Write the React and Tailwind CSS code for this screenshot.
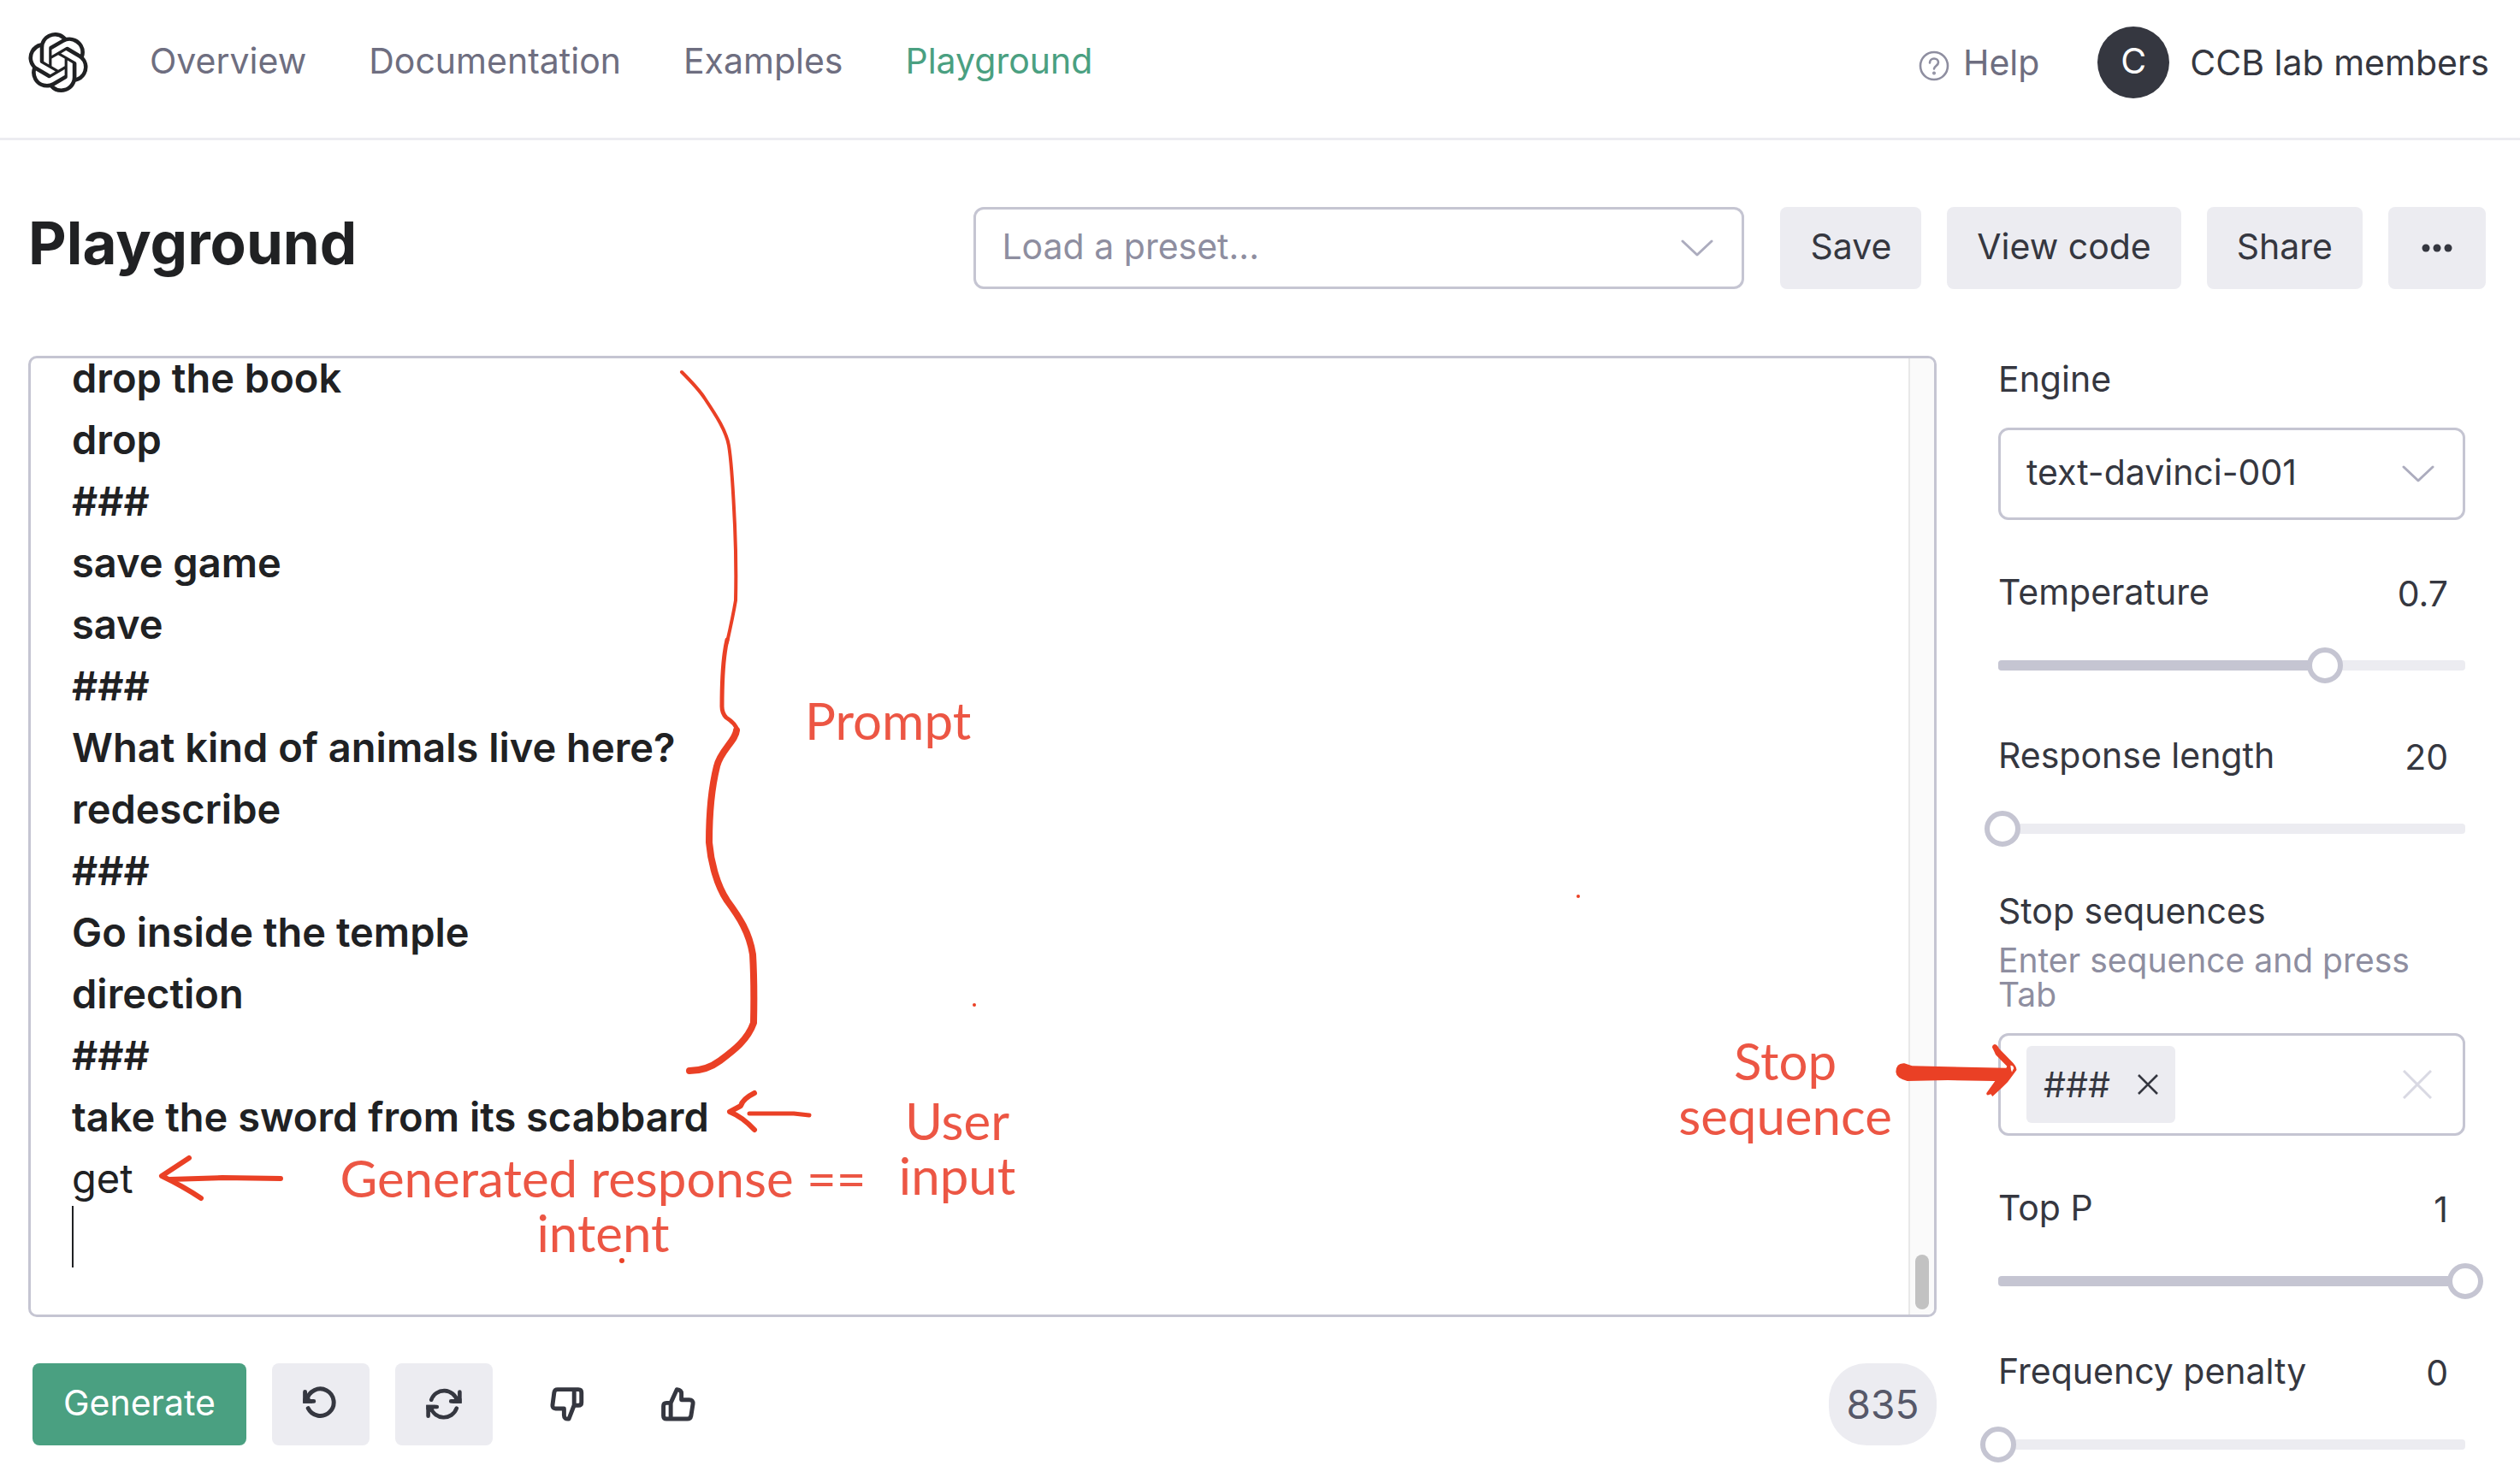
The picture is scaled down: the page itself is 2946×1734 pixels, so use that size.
import { useState } from "react";
import { SiOpenai } from "react-icons/si";

const promptLines = [
  "drop the book",
  "drop",
  "###",
  "save game",
  "save",
  "###",
  "What kind of animals live here?",
  "redescribe",
  "###",
  "Go inside the temple",
  "direction",
  "###",
  "take the sword from its scabbard",
];

function Chevron() {
  return (
    <svg
      className="pointer-events-none absolute top-1/2 right-9 h-5 w-[38px] -translate-y-1/2"
      viewBox="0 0 38 20"
      fill="none"
      stroke="#acacbe"
      strokeWidth="3"
      strokeLinecap="round"
      strokeLinejoin="round"
      aria-hidden="true"
    >
      <path d="M2 2 19 18 36 2" />
    </svg>
  );
}

function HelpIcon() {
  return (
    <svg className="mt-2 size-9" viewBox="0 0 36 36" fill="none" stroke="#8e8ea0" strokeWidth="2.6" strokeLinecap="round" aria-hidden="true">
      <circle cx="18" cy="18" r="16" />
      <path d="M13 14.5c0-3 2.2-5 5-5s5 1.900 5 4.500c0 3.800-5 4-5 7.500" />
      <circle cx="18" cy="26.500" r="0.700" fill="#8e8ea0" />
    </svg>
  );
}

function UndoIcon() {
  return (
    <svg className="h-11 w-[46px]" viewBox="155 124 140 132" fill="none" stroke="#353740" strokeWidth="15" strokeLinecap="round" aria-hidden="true">
      <path d="M180 204A48 48 0 1 0 176 174" />
      <path d="M169 146V179H200" />
      <path d="M162 186V170L180 160 195 180V186Z" fill="#353740" stroke="none" />
    </svg>
  );
}

function RefreshIcon() {
  return (
    <svg className="h-11 w-[46px]" viewBox="587 124 140 132" fill="none" stroke="#353740" strokeWidth="14" strokeLinecap="round" aria-hidden="true">
      <path d="M612 174A48 48 0 0 1 704 178" />
      <path d="M713 146V179H682" />
      <path d="M720 186V170L702 160 687 180V186Z" fill="#353740" stroke="none" />
      <path d="M702 204A48 48 0 0 1 610 200" />
      <path d="M601 232V199H632" />
      <path d="M594 192V208L612 218 627 198V192Z" fill="#353740" stroke="none" />
    </svg>
  );
}

function ThumbDownIcon() {
  return (
    <svg className="h-11 w-[46px]" viewBox="1020 122 140 134" fill="none" stroke="#353740" strokeWidth="15" strokeLinejoin="round" aria-hidden="true">
      <path d="M1115 192 1096 241Q1079 243 1079 228V204H1049Q1037 204 1038 192L1044 146Q1046 136 1056 136H1130Q1141 136 1141 147V183Q1141 193 1130 193H1115V136" />
    </svg>
  );
}

function ThumbUpIcon() {
  return (
    <svg className="h-11 w-[46px]" viewBox="1415 122 140 134" fill="none" stroke="#353740" strokeWidth="15" strokeLinejoin="round" aria-hidden="true">
      <path d="M1458 184 1480 136Q1496 138 1496 150V173H1524Q1538 173 1537 187L1530 231Q1528 241 1517 241H1443Q1432 241 1432 230V195Q1432 184 1443 184H1458V241" />
    </svg>
  );
}

function SmallButton({ children }) {
  return (
    <button type="button" className="flex h-24 items-center rounded-lg bg-[#ececf1] px-[35px] pb-1 text-[#353740]">
      {children}
    </button>
  );
}

function Slider({ id, label, min, max, step, initial, className }) {
  const [value, setValue] = useState(initial);
  const percent = ((value - min) / (max - min)) * 100;
  return (
    <div className={className}>
      <div className="mb-[41px] flex h-12 justify-between pr-5">
        <label htmlFor={id}>{label}</label>
        <output htmlFor={id} className="pt-0.5">
          {value}
        </output>
      </div>
      <div className="relative flex h-[42px] items-center">
        <div className="h-3 w-full overflow-hidden rounded bg-[#ececf1]">
          <div className="h-full bg-[#c5c5d2]" style={{ width: `${percent}%` }} />
        </div>
        <input
          id={id}
          type="range"
          min={min}
          max={max}
          step={step}
          value={value}
          onChange={(e) => setValue(Number(e.target.value))}
          className="absolute inset-y-0 -left-[21px] h-[42px] w-[calc(100%+42px)] appearance-none bg-transparent [&::-webkit-slider-thumb]:size-[42px] [&::-webkit-slider-thumb]:appearance-none [&::-webkit-slider-thumb]:rounded-full [&::-webkit-slider-thumb]:border-[6px] [&::-webkit-slider-thumb]:border-[#c5c5d2] [&::-webkit-slider-thumb]:bg-white"
        />
      </div>
    </div>
  );
}

function EditorAnnotations() {
  return (
    <div className="pointer-events-none absolute top-0 left-0 font-[Lato,sans-serif] text-[60px] leading-16 text-[#ec5644]">
      <svg
        className="absolute top-0 left-0 h-[1120px] w-[1860px]"
        viewBox="36 419 1860 1120"
        fill="none"
        stroke="#ea4025"
        strokeLinecap="round"
        strokeLinejoin="round"
        aria-hidden="true"
      >
        <path strokeWidth="4" d="M797 435C808 446 817 455 824 466C838 487 849 504 852 521C856 545 857 575 859 614Q861 660 860 702Q857 720 850 751" />
        <path strokeWidth="5" d="M850 748C846 765 844 790 844 826Q844 834 849 839Q860 846 862 854" />
        <path strokeWidth="8" d="M861 854C860 866 842 878 838 896C832 920 829 950 829 985C831 1008 838 1035 850 1053C864 1072 876 1090 880 1116Q882 1150 881 1196C874 1216 858 1228 842 1240Q826 1252 806 1252" />
        <path strokeWidth="6" d="M882 1278Q868 1285 866 1293L853 1300Q868 1306 882 1321" />
        <path strokeWidth="5" d="M876 1302H928L946 1304" />
        <path strokeWidth="6" d="M221 1354 189 1375Q214 1387 235 1401" />
        <path strokeWidth="6" d="M199 1379 260 1377 328 1378" />
        <g fill="#ea4025" stroke="none">
          <circle cx="1139" cy="1175" r="2" />
          <circle cx="727" cy="1474" r="3" />
          <circle cx="1845" cy="1048" r="2" />
        </g>
      </svg>
      <p className="absolute top-[391px] left-[905px]">Prompt</p>
      <p className="absolute top-[859px] left-[1008px] w-[150px] text-center">User input</p>
      <p className="absolute top-[926px] left-[334px] w-[670px] text-center">Generated response == intent</p>
    </div>
  );
}

function StopAnnotation() {
  return (
    <div className="pointer-events-none absolute -top-[3px] right-full flex text-center font-[Lato,sans-serif] text-[60px] leading-16 text-[#ec5644]">
      <p className="mr-[122px] w-[260px]">Stop sequence</p>
      <svg className="absolute top-3 -right-[22px] h-[64px] w-[148px]" viewBox="68 90 444 192" fill="#ea4025" aria-hidden="true">
        <path d="M78 190Q79 158 108 160L135 169 260 172 465 176 468 170 428 130Q422 115 416 104 416 95 425 93 434 94 440 108L478 147Q504 172 501 184 488 202 470 226 450 246 417 276L411 268Q394 276 396 264L426 222 260 219 118 222Q79 212 78 190Z" />
        <path d="M480 167Q492 168 491 178L485 191 482 182Z" fill="#fff" />
      </svg>
    </div>
  );
}

export default function App() {
  return (
    <div className="flex h-screen flex-col overflow-hidden bg-white font-[Inter,sans-serif] text-[41px] leading-12 text-[#353740]">
      <header className="flex items-center border-b-[3px] border-[#ececf1] pt-[31px] pr-9 pb-[46px] pl-[33px]">
        <a href="#home" aria-label="OpenAI">
          <SiOpenai className="size-[70px] text-[#202123]" />
        </a>
        <nav className="ml-[72px] flex gap-[73px] pb-1 text-[#6e6e80]">
          <a href="#overview">Overview</a>
          <a href="#documentation">Documentation</a>
          <a href="#examples">Examples</a>
          <a href="#playground" className="text-[#4aa081]">Playground</a>
        </nav>
        <a href="#help" className="ml-auto flex items-center gap-4 text-[#6e6e80]">
          <HelpIcon />
          Help
        </a>
        <button type="button" className="ml-[68px] flex items-center gap-6">
          <span className="flex size-[84px] items-center justify-center rounded-full bg-[#353740] pb-1 text-white">C</span>
          CCB lab members
        </button>
      </header>

      <main className="flex min-h-0 flex-1 flex-col pt-[78px] pr-10 pb-11 pl-[33px]">
        <div className="mb-[78px] flex h-24 items-center gap-[30px]">
          <h1 className="mr-auto pb-3 text-[69px] leading-20 font-bold text-[#202123]">Playground</h1>
          <div className="relative mr-3 w-[901px]">
            <select aria-label="Load a preset" className="h-24 w-full appearance-none rounded-xl border-[3px] border-[#c5c5d2] bg-white pb-1 pl-[30px] text-[#8e8ea0]">
              <option>Load a preset...</option>
            </select>
            <Chevron />
          </div>
          <SmallButton>Save</SmallButton>
          <SmallButton>View code</SmallButton>
          <SmallButton>Share</SmallButton>
          <button type="button" aria-label="More" className="flex h-24 w-[114px] items-center justify-center rounded-lg bg-[#ececf1]">
            <svg className="h-3 w-9" viewBox="0 0 36 12" fill="#353740" aria-hidden="true">
              <circle cx="5" cy="6" r="4.500" />
              <circle cx="18" cy="6" r="4.500" />
              <circle cx="31" cy="6" r="4.500" />
            </svg>
          </button>
        </div>

        <div className="flex min-h-0 flex-1 gap-[72px]">
          <section className="flex min-w-0 flex-1 flex-col">
            <div className="relative flex min-h-0 flex-1 rounded-[10px] border-[3px] border-[#c5c5d2]">
              <div
                role="textbox"
                aria-label="Prompt"
                aria-multiline="true"
                contentEditable
                suppressContentEditableWarning
                className="flex min-w-0 flex-1 flex-col justify-end overflow-hidden pb-[55px] pl-12 text-[47px] leading-[72px] text-[#202123] outline-none"
              >
                {promptLines.map((line, i) => (
                  <p key={i} className="font-semibold">
                    {line}
                  </p>
                ))}
                <p>get</p>
                <p className="h-[72px]">
                  <span className="-mt-1 block h-[72px] w-0.5 bg-[#202123]" />
                </p>
              </div>
              <div className="flex w-[30px] flex-col justify-end rounded-r-lg border-l-2 border-[#e8e8e8] bg-[#fafafa] pb-1.5 pl-1.5" aria-hidden="true">
                <div className="h-16 w-4 rounded-full bg-[#c2c2c2]" />
              </div>
              <EditorAnnotations />
            </div>

            <div className="mt-[54px] flex h-24 items-center pl-[5px]">
              <button type="button" className="mr-[30px] h-24 rounded-lg bg-[#4aa081] px-9 pb-1 text-white">Generate</button>
              <button type="button" aria-label="Undo" className="mr-[30px] flex h-24 w-[114px] items-center justify-center rounded-lg bg-[#ececf1]">
                <UndoIcon />
              </button>
              <button type="button" aria-label="Regenerate" className="mr-[30px] flex h-24 w-[114px] items-center justify-center rounded-lg bg-[#ececf1]">
                <RefreshIcon />
              </button>
              <button type="button" aria-label="Thumbs down" className="mr-4 flex h-24 w-[114px] items-center justify-center">
                <ThumbDownIcon />
              </button>
              <button type="button" aria-label="Thumbs up" className="flex h-24 w-[114px] items-center justify-center">
                <ThumbUpIcon />
              </button>
              <span className="ml-auto flex h-24 w-[126px] items-center justify-center rounded-[44px] bg-[#ececf1] text-[46px] text-[#565869]">835</span>
            </div>
          </section>

          <aside className="mr-6 w-[546px] pt-[3px]">
            <label htmlFor="engine" className="block">Engine</label>
            <div className="relative mt-[33px]">
              <select id="engine" className="block h-[108px] w-full appearance-none rounded-xl border-[3px] border-[#c5c5d2] bg-white pb-1 pl-[30px]">
                <option>text-davinci-001</option>
              </select>
              <Chevron />
            </div>
            <Slider id="temperature" label="Temperature" min={0} max={1} step={0.1} initial={0.7} className="mt-[60px]" />
            <Slider id="length" label="Response length" min={0} max={2048} step={1} initial={20} className="mt-[60px]" />

            <label htmlFor="stop" className="mt-[51px] block">Stop sequences</label>
            <p className="mt-3.5 text-[39px] leading-10 text-[#8e8ea0]">Enter sequence and press Tab</p>
            <div className="relative mt-[25px] flex h-[120px] items-center rounded-xl border-[3px] border-[#c5c5d2] pr-9 pl-[30px]">
              <span className="flex h-[90px] items-center gap-8 rounded-md bg-[#ececf1] pr-5 pl-5">
                ###
                <button type="button" aria-label="Remove ###">
                  <svg className="size-6" viewBox="0 0 24 24" stroke="#353740" strokeWidth="2.600" aria-hidden="true">
                    <path d="M1 1 23 23M23 1 1 23" />
                  </svg>
                </button>
              </span>
              <input id="stop" type="text" className="min-w-0 flex-1 outline-none" />
              <button type="button" aria-label="Clear all">
                <svg className="size-[34px]" viewBox="0 0 34 34" stroke="#d9d9e3" strokeWidth="3" aria-hidden="true">
                  <path d="M1 1 33 33M33 1 1 33" />
                </svg>
              </button>
              <StopAnnotation />
            </div>
            <Slider id="top-p" label="Top P" min={0} max={1} step={0.1} initial={1} className="mt-[60px]" />
            <Slider id="frequency" label="Frequency penalty" min={0} max={2} step={0.1} initial={0} className="mt-[60px]" />
          </aside>
        </div>
      </main>
    </div>
  );
}
